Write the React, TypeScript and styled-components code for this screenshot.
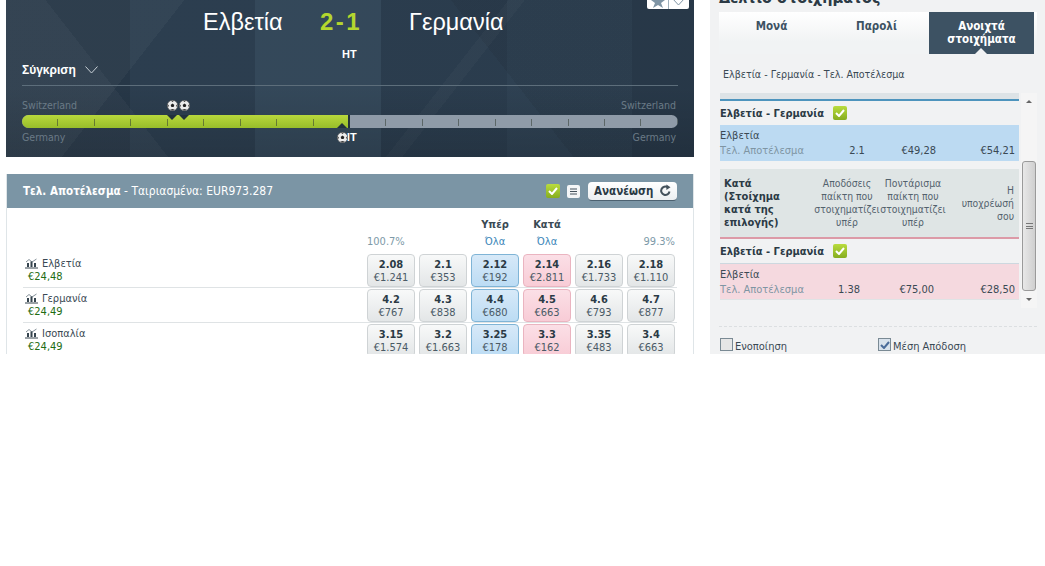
import styled, { createGlobalStyle } from "styled-components";

const Global = createGlobalStyle`
    html, body { margin: 0; padding: 0; background: #fff; }
    body { font-family: "DejaVu Sans", "Liberation Sans", sans-serif; font-stretch: condensed; font-size: 11px; color: #2b3a45; }
    * { box-sizing: border-box; }
`;

const Page = styled.div`
    width: 1045px;
    height: 354px;
    overflow: hidden;
    display: flex;
    align-items: flex-start;
`;

const LeftColumn = styled.div`
    width: 688px;
    margin-left: 6px;
    display: flex;
    flex-direction: column;
    gap: 17px;
`;

/* ---------- hero ---------- */

const Hero = styled.section`
    position: relative;
    height: 157px;
    padding: 0 16px;
    background-color: #28394a;
    background-image:
        linear-gradient(180deg, rgba(0, 0, 0, 0) 55%, rgba(0, 0, 0, .14)),
        linear-gradient(128deg, rgba(255, 255, 255, .035) 0 22%, transparent 22% 62%, rgba(255, 255, 255, .025) 62% 64%, transparent 64%),
        linear-gradient(52deg, rgba(255, 255, 255, .03) 0 20%, transparent 20% 70%, rgba(0, 0, 0, .06) 70%),
        linear-gradient(90deg, rgba(0, 0, 0, .04) 0 124px, rgba(90, 120, 140, .08) 124px 249px, rgba(90, 120, 140, .24) 249px 375px, rgba(90, 120, 140, .05) 375px 501px, rgba(90, 120, 140, .13) 501px 626px, rgba(90, 120, 140, .03) 626px);
    font-family: "Liberation Sans", sans-serif;
    font-stretch: normal;
`;

const FavBox = styled.div`
    position: absolute;
    top: -6px;
    right: 5px;
    width: 42px;
    height: 15px;
    background: #fff;
    border-radius: 2px;
    display: flex;
    align-items: center;
    justify-content: space-around;
    padding: 0 2px;
`;

const FavDivider = styled.span`
    width: 1px;
    height: 100%;
    background: #9fb0bb;
`;

const ScoreLine = styled.div`
    display: flex;
    align-items: center;
    height: 44px;
    padding-left: 181px;
`;

const Team = styled.span<{ $w: number }>`
    font-size: 23.5px;
    color: #fff;
    width: ${(p) => p.$w}px;
`;

const Score = styled.span`
    font-size: 24px;
    font-weight: 700;
    color: #b4d62e;
    width: 125px;
    padding-left: 36px;
    letter-spacing: 2.5px;
    white-space: nowrap;
`;

const Period = styled.div`
    height: 16px;
    margin-top: 2px;
    padding-left: 320px;
    font-size: 11px;
    line-height: 16px;
    font-weight: 700;
    color: #fff;
`;

const CompareRow = styled.div`
    height: 24px;
    border-bottom: 1px solid #5d6e7b;
    display: flex;
    align-items: flex-start;
    gap: 9px;
    font-size: 12px;
    line-height: 16px;
    font-weight: 700;
    color: #fff;
    svg { margin-top: 4px; }
`;

const TimelineWrap = styled.div`
    position: absolute;
    left: 16px;
    right: 16px;
    top: 98px;
`;

const TeamLabels = styled.div`
    display: flex;
    justify-content: space-between;
    padding-right: 2px;
    height: 14px;
    line-height: 14px;
    font-family: "DejaVu Sans", sans-serif;
    font-stretch: condensed;
    font-size: 10.5px;
    color: #6a7a86;
`;

const Bar = styled.div`
    position: relative;
    height: 13px;
    margin: 3px 0 2px;
    border-radius: 7px;
    overflow: hidden;
    background: #8f9ba8;
`;

const BarFill = styled.div`
    height: 100%;
    background: linear-gradient(180deg, #b8d83c, #98bd2a);
    border-right: 2px solid #22313d;
`;

const Ticks = styled.div`
    position: absolute;
    inset: 4px 0 2px 0;
    background-image: repeating-linear-gradient(90deg, transparent 0 35.44px, rgba(50, 60, 50, .55) 35.44px 36.44px);
`;

const BallSvg = styled.svg<{ $x: number; $y: number }>`
    position: absolute;
    left: ${(p) => p.$x}px;
    top: ${(p) => p.$y}px;
`;

const Notch = styled.span<{ $x: number; $y: number; $up?: boolean }>`
    position: absolute;
    left: ${(p) => p.$x}px;
    top: ${(p) => p.$y}px;
    width: 0;
    height: 0;
    border-left: 5px solid transparent;
    border-right: 5px solid transparent;
    ${(p) => (p.$up ? "border-bottom: 5px solid #22313d;" : "border-top: 5px solid #22313d;")}
`;

const HtTag = styled.span`
    position: absolute;
    left: 320px;
    top: 33px;
    font-size: 11px;
    font-weight: 700;
    line-height: 12px;
    color: #fff;
`;

/* ---------- market ---------- */

const Market = styled.section`
    height: 200px;
    border: 1px solid #dfe5e8;
    border-top: 0;
    overflow: hidden;
`;

const MarketHeader = styled.header`
    height: 34px;
    margin: 0 -1px;
    background: #7b95a5;
    padding: 0 17px;
    display: flex;
    align-items: center;
    color: #fff;
    font-size: 12px;
`;

const MarketTitle = styled.span`
    flex: 1;
    b { font-size: 11.5px; font-weight: 700; }
`;

const HeaderTools = styled.div`
    display: flex;
    align-items: center;
    gap: 7px;
`;

const CheckBadge = styled.span`
    width: 14px;
    height: 14px;
    border-radius: 2px;
    background: linear-gradient(180deg, #b9dc3e, #86ad1f);
    display: inline-flex;
    align-items: center;
    justify-content: center;
`;

const ListBadge = styled.span`
    width: 13px;
    height: 13px;
    border-radius: 2px;
    background: #f4f6f7;
    display: inline-flex;
    align-items: center;
    justify-content: center;
`;

const RefreshButton = styled.button`
    height: 19px;
    width: 89px;
    margin-left: 1px;
    border: 0;
    border-bottom: 1px solid #4c6170;
    border-radius: 4px;
    background: linear-gradient(180deg, #fff, #eceff1);
    display: flex;
    align-items: center;
    justify-content: space-between;
    padding: 0 5px 0 6px;
    font: inherit;
    font-size: 11.5px;
    font-weight: 700;
    color: #2b3a45;
`;

const Grid = styled.div`
    padding: 0 16px;
`;

const ColumnHead = styled.div`
    height: 45px;
    padding-top: 10px;
    display: grid;
    grid-template-columns: 340px repeat(6, 48px);
    column-gap: 4px;
    grid-template-rows: 17px 17px;
    text-align: center;
`;

const SideHead = styled.span<{ $col: number }>`
    grid-column: ${(p) => p.$col};
    grid-row: 1;
    font-weight: 700;
    color: #3a4954;
`;

const AllLink = styled.span<{ $col: number }>`
    grid-column: ${(p) => p.$col};
    grid-row: 2;
    color: #3a86b8;
`;

const Percent = styled.span<{ $col: number; $right?: boolean }>`
    grid-column: ${(p) => p.$col};
    grid-row: 2;
    color: #7d9aa8;
    text-align: ${(p) => (p.$right ? "right" : "left")};
`;

const RunnerRow = styled.div`
    height: 35px;
    padding-top: 1px;
    display: grid;
    grid-template-columns: 340px repeat(6, 48px);
    column-gap: 4px;
    border-bottom: 1px solid #dfe3e5;
`;

const RunnerInfo = styled.div`
    padding: 3px 0 0 2px;
    line-height: 13px;
`;

const RunnerName = styled.div`
    display: flex;
    align-items: center;
    gap: 4px;
    color: #3a4954;
`;

const RunnerPnl = styled.div`
    padding-left: 3px;
    color: #1e6d12;
`;

const OddsCell = styled.div<{ $kind: "none" | "back" | "lay" }>`
    height: 33px;
    border-radius: 4px;
    border: 1px solid ${(p) => (p.$kind === "back" ? "#7fb4d6" : p.$kind === "lay" ? "#eab4c0" : "#cfd3d5")};
    background: ${(p) =>
        p.$kind === "back"
            ? "linear-gradient(180deg, #d7e9f8, #bcdcf4)"
            : p.$kind === "lay"
              ? "linear-gradient(180deg, #fbdfe6, #f8ccd6)"
              : "linear-gradient(180deg, #f8f9f9, #e3e6e7)"};
    text-align: center;
    padding-top: 3px;
    line-height: 13px;
    color: #4a5a66;
    b { display: block; color: #2b3a45; font-weight: 700; }
`;

/* ---------- bet slip ---------- */

const Slip = styled.aside`
    width: 335px;
    height: 354px;
    margin-left: 16px;
    background: #f1f2f3;
    padding: 0 8px 0 9px;
    position: relative;
`;

const SlipTitle = styled.div`
    height: 12px;
    margin-top: -8px;
    font-size: 16px;
    font-weight: 700;
    line-height: 12px;
    color: #2b3a45;
    white-space: nowrap;
`;

const Tabs = styled.div`
    margin-top: 8px;
    height: 42px;
    display: grid;
    grid-template-columns: repeat(3, 105px);
    background: linear-gradient(180deg, #fff 0, #f1f3f4 70%);
    font-size: 11.5px;
`;

const Tab = styled.div<{ $active?: boolean }>`
    position: relative;
    display: flex;
    align-items: ${(p) => (p.$active ? "center" : "flex-start")};
    justify-content: center;
    text-align: center;
    padding-top: ${(p) => (p.$active ? "0" : "8px")};
    line-height: 13px;
    font-weight: 700;
    color: ${(p) => (p.$active ? "#fff" : "#3d5263")};
    background: ${(p) => (p.$active ? "#3d5263" : "transparent")};
    ${(p) =>
        p.$active &&
        `&::after {
            content: "";
            position: absolute;
            left: 46px;
            bottom: 0;
            border-left: 6px solid transparent;
            border-right: 6px solid transparent;
            border-bottom: 6px solid #f1f2f3;
        }`}
`;

const SlipCaption = styled.div`
    height: 39px;
    padding: 13px 0 0 4px;
    line-height: 14px;
    font-size: 10.6px;
    color: #3a4954;
`;

const SlipScroll = styled.div`
    display: flex;
    gap: 2px;
    height: 215px;
`;

const SlipList = styled.div`
    width: 299px;
    margin-left: 1px;
`;

const TopStrip = styled.div`
    height: 8px;
    background: #dde3e6;
    border-bottom: 2px solid #4d94bd;
`;

const EventRow = styled.div`
    height: 24px;
    display: flex;
    align-items: center;
    gap: 9px;
    font-size: 11px;
    font-weight: 700;
    color: #2b3a45;
`;

const BetRow = styled.div<{ $lay?: boolean }>`
    height: ${(p) => (p.$lay ? "37px" : "36px")};
    background: ${(p) => (p.$lay ? "#f5d9df" : "#bcdaf2")};
    border-top: ${(p) => (p.$lay ? "1px solid #cdd8df" : "0")};
    border-bottom: ${(p) => (p.$lay ? "1px solid #dfe3e5" : "0")};
    padding-top: 4px;
    line-height: 13px;
    color: #3a4954;
`;

const BetValues = styled.div<{ $lay?: boolean }>`
    display: grid;
    grid-template-columns: 104px ${(p) => (p.$lay ? "50px 60px" : "66px 46px")} 1fr;
    padding: 2px 4px 0 0;
    color: #3a4954;
    span:first-child { color: #7f95a3; }
    span:nth-child(2) { text-align: center; }
    span:nth-child(3), span:nth-child(4) { text-align: right; }
`;

const LayHead = styled.div`
    margin-top: 8px;
    height: 70px;
    background: #dfe5e5;
    border-bottom: 2px solid #dc9aa7;
    display: grid;
    grid-template-columns: 90px 66px 66px 1fr;
    align-items: center;
    padding: 0 5px 0 4px;
    line-height: 13px;
    color: #53626d;
`;

const LayTitle = styled.div`
    font-weight: 700;
    color: #2b3a45;
`;

const LayCol = styled.div<{ $right?: boolean }>`
    font-size: 10.3px;
    text-align: ${(p) => (p.$right ? "right" : "center")};
`;

const Scrollbar = styled.div`
    width: 16px;
    background: #f5f5f5;
    display: flex;
    flex-direction: column;
    align-items: center;
    justify-content: space-between;
    position: relative;
    padding: 7px 0;
    font-size: 0;
`;

const Arrow = styled.span<{ $down?: boolean }>`
    width: 0;
    height: 0;
    border-left: 3px solid transparent;
    border-right: 3px solid transparent;
    ${(p) => (p.$down ? "border-top: 3px solid #666;" : "border-bottom: 3px solid #666;")}
`;

const Thumb = styled.div`
    position: absolute;
    left: 1px;
    top: 68px;
    width: 14px;
    height: 130px;
    border: 1px solid #9a9a9a;
    border-radius: 3px;
    background: linear-gradient(90deg, #e8e8e8, #cfcfcf);
    display: flex;
    align-items: center;
    justify-content: center;
`;

const Grip = styled.span`
    width: 7px;
    height: 7px;
    background: repeating-linear-gradient(180deg, #777 0 1px, transparent 1px 2.5px);
`;

const SlipFooter = styled.div`
    margin-top: 18px;
    border-top: 1px dashed #dcdfe1;
    padding: 11px 0 0 1px;
    display: grid;
    grid-template-columns: 158px 1fr;
`;

const CheckLine = styled.label`
    display: flex;
    align-items: flex-start;
    gap: 2px;
    line-height: 14px;
    color: #3a4954;
    span + span { padding-top: 2px; }
`;

const FakeBox = styled.span<{ $on?: boolean }>`
    flex: none;
    width: 13px;
    height: 13px;
    border: 1px solid #7a8a94;
    background: ${(p) => (p.$on ? "#d8e2ec" : "#e6e6e6")};
    display: inline-flex;
    align-items: center;
    justify-content: center;
`;

/* ---------- drawings ---------- */

const ChartIcon = () => (
    <svg width="13" height="11" viewBox="0 0 13 11">
        <path d="M1 4 L4 1.5 L7 4 L11.5 1" fill="none" stroke="#66757f" strokeWidth="0.8" />
        <path d="M2 5h2v4H2zM5.5 3.5h2V9h-2zM9 5h2v4H9z" fill="#36454f" />
        <path d="M0 10h13" stroke="#36454f" />
    </svg>
);

const Tick = ({ color = "#fff" }: { color?: string }) => (
    <svg width="10" height="8" viewBox="0 0 10 8">
        <path d="M1 4 L4 7 L9 1" fill="none" stroke={color} strokeWidth="2" />
    </svg>
);

const Chevron = ({ color = "#c8d0d6", w = 13 }: { color?: string; w?: number }) => (
    <svg width={w} height="8" viewBox="0 0 13 8">
        <path d="M0.5 0.5 L6.5 7 L12.5 0.5" fill="none" stroke={color} />
    </svg>
);

const Refresh = () => (
    <svg width="13" height="13" viewBox="0 0 13 13">
        <path d="M10.5 7.5 A4.2 4.2 0 1 1 8.6 3.2" fill="none" stroke="#44525c" strokeWidth="2" />
        <path d="M7.4 0.5 L11.5 3.2 L7.4 6z" fill="#44525c" />
    </svg>
);

const Ball = ({ x, y }: { x: number; y: number }) => (
    <BallSvg $x={x} $y={y} width="11" height="11" viewBox="0 0 11 11">
        <circle cx="5.5" cy="5.5" r="5.2" fill="#ececec" stroke="#555" strokeWidth="0.6" />
        <path d="M5.5 3.6 L7.3 4.9 L6.6 7 L4.4 7 L3.7 4.9z" fill="#222" />
        <path d="M4 .7 L7 .7 L5.5 1.9zM.6 4 L1.9 5.5 L.9 7.5zM10.4 4 L9.1 5.5 L10.1 7.5zM3 9.8 L5.5 10.4 L8 9.8 L5.5 9z" fill="#333" />
    </BallSvg>
);

type Cell = [string, string];

const runners: { name: string; pnl: string; cells: Cell[] }[] = [
    { name: "Ελβετία", pnl: "€24,48", cells: [["2.08", "€1.241"], ["2.1", "€353"], ["2.12", "€192"], ["2.14", "€2.811"], ["2.16", "€1.733"], ["2.18", "€1.110"]] },
    { name: "Γερμανία", pnl: "€24,49", cells: [["4.2", "€767"], ["4.3", "€838"], ["4.4", "€680"], ["4.5", "€663"], ["4.6", "€793"], ["4.7", "€877"]] },
    { name: "Ισοπαλία", pnl: "€24,49", cells: [["3.15", "€1.574"], ["3.2", "€1.663"], ["3.25", "€178"], ["3.3", "€162"], ["3.35", "€483"], ["3.4", "€663"]] },
];

const kindOf = (i: number) => (i === 2 ? "back" : i === 3 ? "lay" : "none");

export default function App() {
    return (
        <>
            <Global />
            <Page>
                <LeftColumn>
                    <Hero>
                        <FavBox>
                            <svg width="16" height="14" viewBox="0 0 16 14">
                                <path d="M8 0 L10 5 L15 5 L11 8 L13 13 L8 10 L3 13 L5 8 L1 5 L6 5z" fill="#7f95a5" />
                            </svg>
                            <FavDivider />
                            <Chevron color="#7f95a5" w={15} />
                        </FavBox>
                        <ScoreLine>
                            <Team $w={81}>Ελβετία</Team>
                            <Score>2-1</Score>
                            <Team $w={100}>Γερμανία</Team>
                        </ScoreLine>
                        <Period>HT</Period>
                        <CompareRow>
                            Σύγκριση
                            <Chevron />
                        </CompareRow>
                        <TimelineWrap>
                            <TeamLabels>
                                <span>Switzerland</span>
                                <span>Switzerland</span>
                            </TeamLabels>
                            <Bar>
                                <BarFill style={{ width: `${(328 / 656) * 100}%` }} />
                                <Ticks />
                            </Bar>
                            <TeamLabels>
                                <span>Germany</span>
                                <span>Germany</span>
                            </TeamLabels>
                            <Ball x={145} y={2} />
                            <Ball x={157} y={2} />
                            <Notch $x={145} $y={17} />
                            <Notch $x={157} $y={17} />
                            <Notch $x={315} $y={25} $up />
                            <HtTag>HT</HtTag>
                            <Ball x={315} y={34} />
                        </TimelineWrap>
                    </Hero>
                    <Market>
                        <MarketHeader>
                            <MarketTitle>
                                <b>Τελ. Αποτέλεσμα</b> - Ταιριασμένα: EUR973.287
                            </MarketTitle>
                            <HeaderTools>
                                <CheckBadge>
                                    <Tick />
                                </CheckBadge>
                                <ListBadge>
                                    <svg width="7" height="7" viewBox="0 0 7 7">
                                        <path d="M0 1h7M0 3.5h7M0 6h7" stroke="#44525c" />
                                    </svg>
                                </ListBadge>
                                <RefreshButton>
                                    Ανανέωση
                                    <Refresh />
                                </RefreshButton>
                            </HeaderTools>
                        </MarketHeader>
                        <Grid>
                            <ColumnHead>
                                <SideHead $col={4}>Υπέρ</SideHead>
                                <SideHead $col={5}>Κατά</SideHead>
                                <Percent $col={2}>100.7%</Percent>
                                <AllLink $col={4}>Όλα</AllLink>
                                <AllLink $col={5}>Όλα</AllLink>
                                <Percent $col={7} $right>99.3%</Percent>
                            </ColumnHead>
                            {runners.map((r) => (
                                <RunnerRow key={r.name}>
                                    <RunnerInfo>
                                        <RunnerName>
                                            <ChartIcon />
                                            {r.name}
                                        </RunnerName>
                                        <RunnerPnl>{r.pnl}</RunnerPnl>
                                    </RunnerInfo>
                                    {r.cells.map((c, i) => (
                                        <OddsCell key={c[0]} $kind={kindOf(i)}>
                                            <b>{c[0]}</b>
                                            {c[1]}
                                        </OddsCell>
                                    ))}
                                </RunnerRow>
                            ))}
                        </Grid>
                    </Market>
                </LeftColumn>
                <Slip>
                    <SlipTitle>Δελτίο στοιχήματος</SlipTitle>
                    <Tabs>
                        <Tab>Μονά</Tab>
                        <Tab>Παρολί</Tab>
                        <Tab $active>
                            Ανοιχτά
                            <br />
                            στοιχήματα
                        </Tab>
                    </Tabs>
                    <SlipCaption>Ελβετία - Γερμανία - Τελ. Αποτέλεσμα</SlipCaption>
                    <SlipScroll>
                        <SlipList>
                            <TopStrip />
                            <EventRow>
                                Ελβετία - Γερμανία
                                <CheckBadge>
                                    <Tick />
                                </CheckBadge>
                            </EventRow>
                            <BetRow>
                                Ελβετία
                                <BetValues>
                                    <span>Τελ. Αποτέλεσμα</span>
                                    <span>2.1</span>
                                    <span>€49,28</span>
                                    <span>€54,21</span>
                                </BetValues>
                            </BetRow>
                            <LayHead>
                                <LayTitle>
                                    Κατά
                                    <br />
                                    (Στοίχημα
                                    <br />
                                    κατά της
                                    <br />
                                    επιλογής)
                                </LayTitle>
                                <LayCol>Αποδόσεις παίκτη που στοιχηματίζει υπέρ</LayCol>
                                <LayCol>Ποντάρισμα παίκτη που στοιχηματίζει υπέρ</LayCol>
                                <LayCol $right>
                                    Η
                                    <br />
                                    υποχρέωσή
                                    <br />
                                    σου
                                </LayCol>
                            </LayHead>
                            <EventRow>
                                Ελβετία - Γερμανία
                                <CheckBadge>
                                    <Tick />
                                </CheckBadge>
                            </EventRow>
                            <BetRow $lay>
                                Ελβετία
                                <BetValues $lay>
                                    <span>Τελ. Αποτέλεσμα</span>
                                    <span>1.38</span>
                                    <span>€75,00</span>
                                    <span>€28,50</span>
                                </BetValues>
                            </BetRow>
                        </SlipList>
                        <Scrollbar>
                            <Arrow />
                            <Thumb>
                                <Grip />
                            </Thumb>
                            <Arrow $down />
                        </Scrollbar>
                    </SlipScroll>
                    <SlipFooter>
                        <CheckLine>
                            <FakeBox />
                            <span>Ενοποίηση</span>
                        </CheckLine>
                        <CheckLine>
                            <FakeBox $on>
                                <Tick color="#4a6c9a" />
                            </FakeBox>
                            <span>Μέση Απόδοση</span>
                        </CheckLine>
                    </SlipFooter>
                </Slip>
            </Page>
        </>
    );
}
